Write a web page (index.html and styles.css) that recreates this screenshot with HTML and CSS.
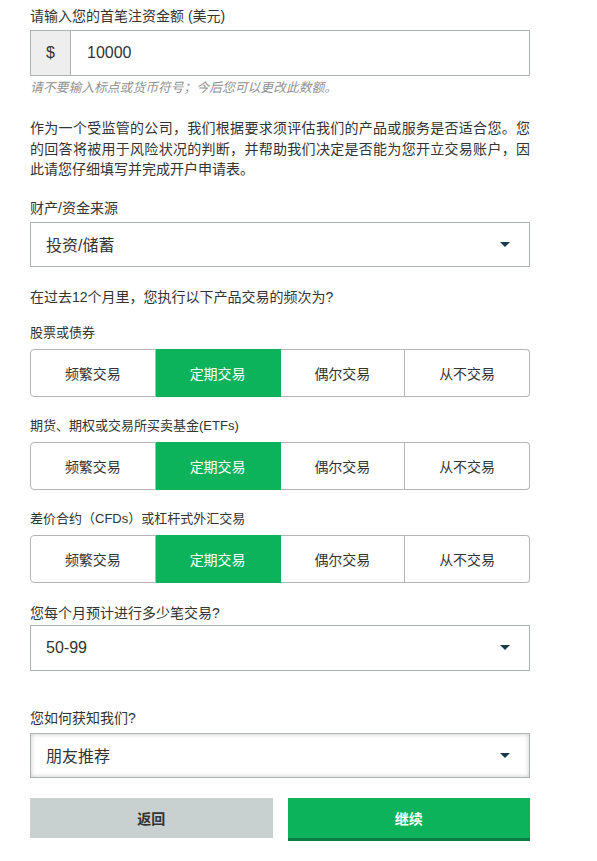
FILE: index.html
```html
<!DOCTYPE html>
<html lang="zh-CN">
<head>
<meta charset="utf-8">
<title>开户申请</title>
<link rel="stylesheet" href="styles.css">
</head>
<body>
<form class="form">
  <div class="field f-amount">
    <label class="label">请输入您的首笔注资金额 (美元)</label>
    <div class="money">
      <span class="prefix">$</span>
      <span class="value">10000</span>
    </div>
    <p class="hint">请不要输入标点或货币符号；今后您可以更改此数额。</p>
  </div>

  <p class="intro">作为一个受监管的公司，我们根据要求须评估我们的产品或服务是否适合您。您的回答将被用于风险状况的判断，并帮助我们决定是否能为您开立交易账户，因此请您仔细填写并完成开户申请表。</p>

  <div class="field f-source">
    <label class="label">财产/资金来源</label>
    <div class="select"><span>投资/储蓄</span><i class="caret"></i></div>
  </div>

  <p class="question">在过去12个月里，您执行以下产品交易的频次为?</p>

  <div class="field f-seg first">
    <label class="label small">股票或债券</label>
    <div class="seg">
      <span class="opt">频繁交易</span>
      <span class="opt sel">定期交易</span>
      <span class="opt">偶尔交易</span>
      <span class="opt">从不交易</span>
    </div>
  </div>

  <div class="field f-seg">
    <label class="label small">期货、期权或交易所买卖基金(ETFs)</label>
    <div class="seg">
      <span class="opt">频繁交易</span>
      <span class="opt sel">定期交易</span>
      <span class="opt">偶尔交易</span>
      <span class="opt">从不交易</span>
    </div>
  </div>

  <div class="field f-seg">
    <label class="label small">差价合约（CFDs）或杠杆式外汇交易</label>
    <div class="seg">
      <span class="opt">频繁交易</span>
      <span class="opt sel">定期交易</span>
      <span class="opt">偶尔交易</span>
      <span class="opt">从不交易</span>
    </div>
  </div>

  <div class="field f-count">
    <label class="label">您每个月预计进行多少笔交易?</label>
    <div class="select"><span>50-99</span><i class="caret"></i></div>
  </div>

  <div class="field f-how">
    <label class="label">您如何获知我们?</label>
    <div class="select focus"><span>朋友推荐</span><i class="caret"></i></div>
  </div>

  <div class="actions">
    <button type="button" class="btn back">返回</button>
    <button type="button" class="btn next">继续</button>
  </div>
</form>
</body>
</html>
```
FILE: styles.css
```css
html, body {
  margin: 0;
  padding: 0;
  background: #fff;
}
body {
  font-family: "Liberation Sans", "Noto Sans CJK SC", sans-serif;
  color: #333;
  font-size: 14px;
}
.form {
  width: 500px;
  padding: 6px 30px 20px;
}
.field {
  display: flex;
  flex-direction: column;
}
.label {
  display: block;
  font-size: 14px;
  line-height: 20px;
  color: #333;
  margin-bottom: 4px;
}
.label.small {
  font-size: 13px;
  margin-bottom: 6px;
}
.money {
  display: flex;
  height: 44px;
  border: 1px solid #adb3b3;
}
.prefix {
  width: 39px;
  background: #eeeeee;
  border-right: 1px solid #adb3b3;
  display: flex;
  align-items: center;
  justify-content: center;
  font-size: 16px;
  color: #333;
}
.value {
  display: flex;
  align-items: center;
  padding-left: 16px;
  font-size: 16px;
  color: #333;
}
.hint {
  margin: 3px 0 0;
  font-size: 12.8px;
  line-height: 18px;
  font-style: italic;
  color: #919191;
}
.intro {
  margin: 21px 0 0;
  font-size: 14px;
  line-height: 20.6px;
  text-align: justify;
  color: #333;
}
.f-source {
  margin-top: 18px;
}
.select {
  height: 43px;
  border: 1px solid #adb3b3;
  display: flex;
  align-items: center;
  justify-content: space-between;
  padding: 0 19px 0 15px;
  font-size: 16px;
  color: #333;
  background: #fff;
}
.select.focus {
  box-shadow: inset 0 0 5px rgba(0, 0, 0, 0.22);
}
.caret {
  width: 0;
  height: 0;
  border-left: 5px solid transparent;
  border-right: 5px solid transparent;
  border-top: 5px solid #173a4b;
}
.question {
  margin: 20px 0 0;
  line-height: 20px;
  font-size: 14px;
}
.f-seg {
  margin-top: 19px;
}
.f-seg.first {
  margin-top: 16px;
}
.seg {
  display: flex;
  height: 48px;
}
.opt {
  flex: 1;
  display: flex;
  align-items: center;
  justify-content: center;
  border: 1px solid #b5b5b5;
  border-left: none;
  font-size: 14px;
  color: #333;
  background: #fff;
}
.opt:first-child {
  border-left: 1px solid #b5b5b5;
  border-radius: 4px 0 0 4px;
}
.opt:last-child {
  border-radius: 0 4px 4px 0;
}
.opt.sel {
  background: #0cb35b;
  border-top-color: #0cb35b;
  border-bottom-color: #0cb35b;
  border-right-color: #0cb35b;
  color: #fff;
}
.f-count {
  margin-top: 20px;
}
.f-count .label {
  margin-bottom: 2px;
}
.f-count .select {
  height: 44px;
}
.f-how {
  margin-top: 37px;
}
.f-how .label {
  margin-bottom: 5px;
}
.actions {
  display: flex;
  gap: 15px;
  margin-top: 20px;
  align-items: flex-start;
}
.btn {
  flex: 1;
  height: 40px;
  border: none;
  margin: 0;
  padding: 0;
  font-family: "Liberation Sans", "Noto Sans CJK SC", sans-serif;
  font-size: 14px;
  font-weight: bold;
  cursor: pointer;
}
.btn.back {
  background: #c8d0d0;
  color: #333;
}
.btn.next {
  height: 43px;
  background: #0cb35b;
  color: #fff;
  border-bottom: 3px solid #0a7d42;
}
```
